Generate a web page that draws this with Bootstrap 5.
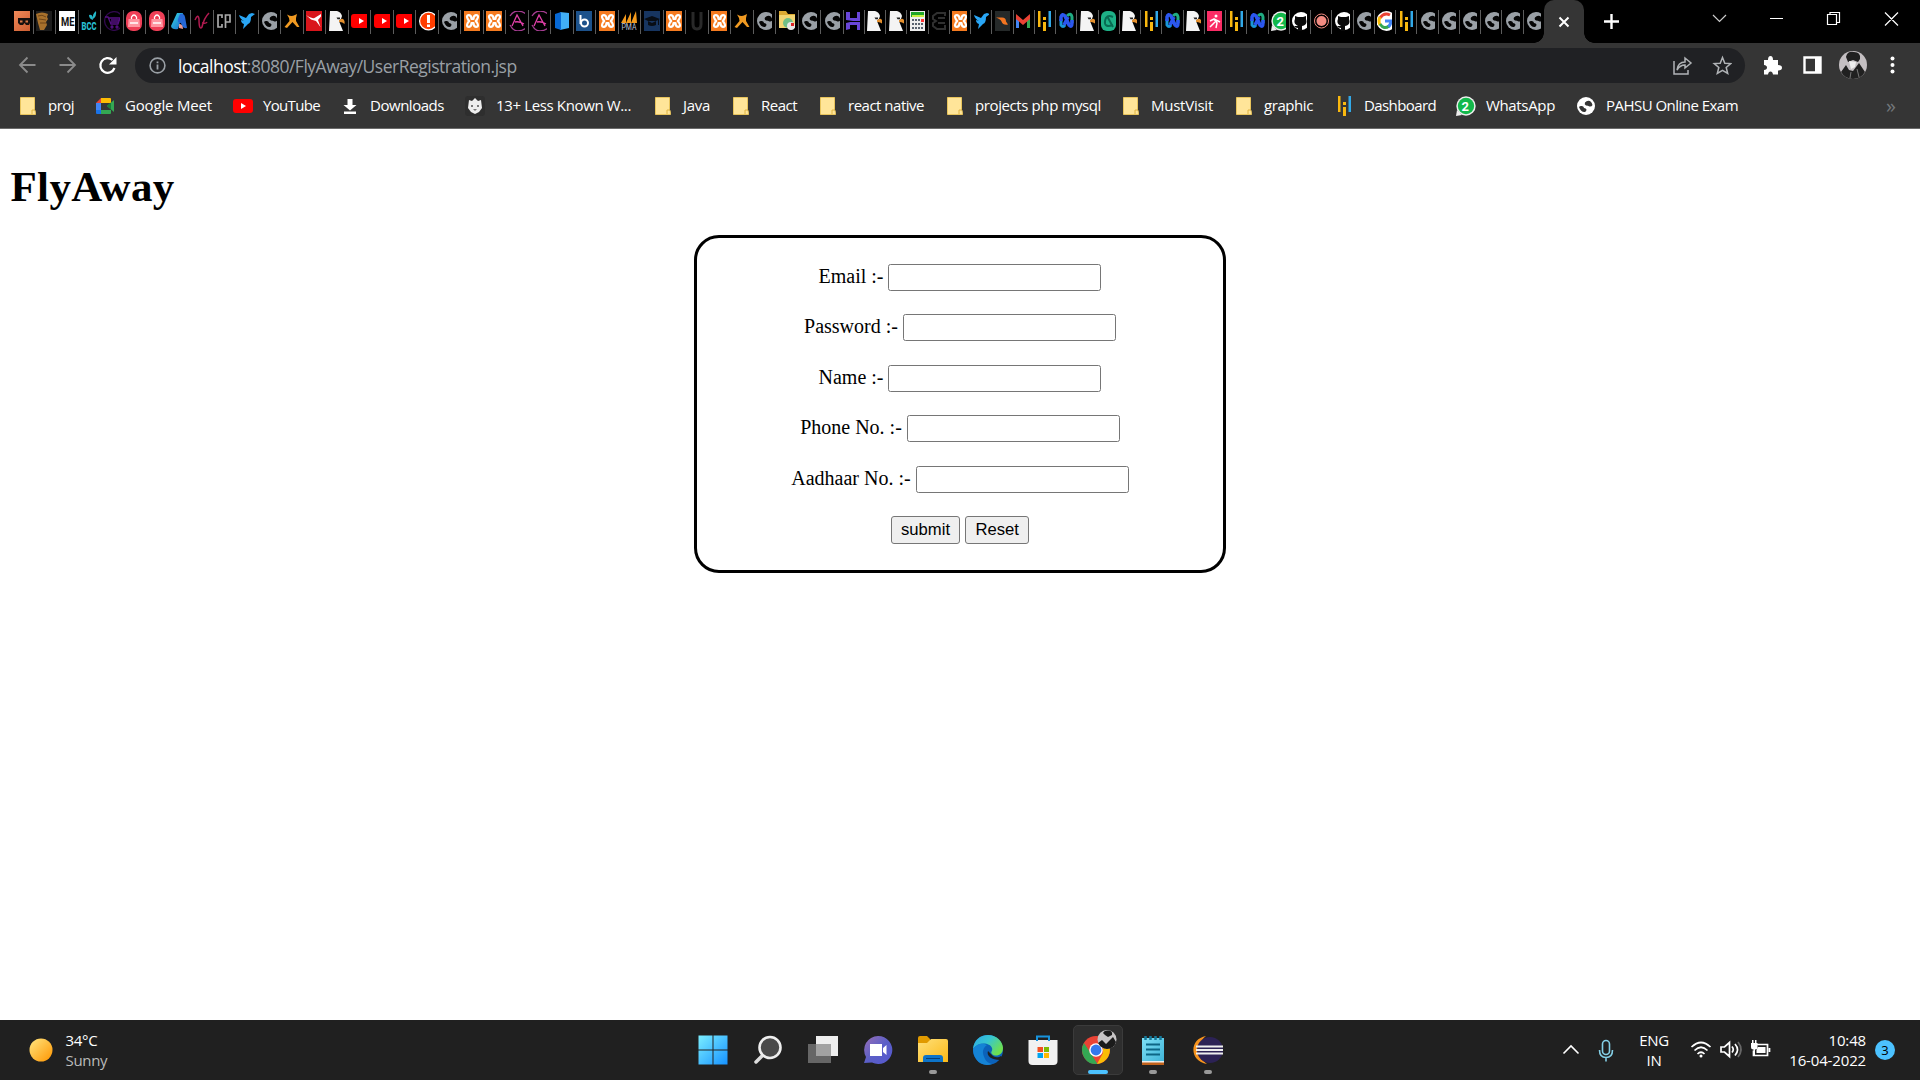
<!DOCTYPE html>
<html lang="en">
<head>
<meta charset="utf-8">
<title>FlyAway - User Registration</title>
<link href="https://cdn.jsdelivr.net/npm/bootstrap@5.3.0/dist/css/bootstrap.min.css" rel="stylesheet">
<style>
body{width:1920px;height:1080px;overflow:hidden;font-family:"Open Sans","Noto Sans",sans-serif;background:#fff;color:#000}
svg{display:block;flex:none}
.strip{height:43px;background:#000;padding-left:11px}
.tabcell{width:22.5px;height:24px;margin-top:10px;padding-left:2.5px;border-right:1px solid #5c5c5c}
.tabcell.slim{width:21.25px}
.tabcell.end{border:0;width:20px}
.tabcell svg{margin-top:1px;width:16px;height:20px}
.tabcell.slim svg,.tabcell.end svg{width:15px}
.active-tab{width:40px;height:43px;background:#353535;border-radius:10px 10px 0 0;position:relative}
.active-tab::before,.active-tab::after{content:"";position:absolute;bottom:0;width:10px;height:10px}
.active-tab::before{left:-10px;background:radial-gradient(circle at 0 0,transparent 9.5px,#353535 10px)}
.active-tab::after{right:-10px;background:radial-gradient(circle at 100% 0,transparent 9.5px,#353535 10px)}
.toolbar{height:42px;background:#353535;padding-top:5px}
.omni{width:1610px;height:35px;border-radius:18px;background:#202124;margin-left:17px;padding:0 13px 0 14px;font-size:17.5px;color:#9aa0a6}
.url{letter-spacing:-.5px;margin-left:12px;line-height:34px}
.bookmarks{height:44px;background:#353535;border-bottom:1px solid #6b6b6b;color:#fff;font-size:15px;padding-left:18px;letter-spacing:-.3px}
.bm{height:41px;white-space:nowrap;--hole:#353535}
.bm svg{width:20px;height:20px;color:#fff}
.bm-more{color:#73777b;font-size:20px}
.view{height:891px;padding:0 10px;font-family:"Liberation Serif",serif}
.brandname{font-size:43px;font-weight:700;letter-spacing:.35px;line-height:49px;margin:0 0 0 .5px;padding-top:33px;height:106px}
.regform{width:532px;height:338px;border:3px solid #000;border-radius:25px;padding-top:26px;font-size:20px;line-height:25px}
.frow{height:50.45px;gap:5px}
.frow input{width:213px;height:27px;border:1px solid #767676;border-radius:2.5px;padding:1px 2px;background:#fff}
.frow button{height:28px;border:1px solid #767676;border-radius:3px;background:#efefef;color:#000;font:16.67px/24px "Liberation Sans",sans-serif;padding:0}
.frow .b-submit{width:69.5px}.frow .b-reset{width:64px}
.taskbar{height:60px;background:#202020;color:#fff;font-size:15px;line-height:20px}
.weather{width:690px;padding-left:29px}
.weather-text{margin-left:12.5px}
.sky{color:#bbb}
.apps{margin-left:-5px}
.tray-text{letter-spacing:-.3px}
.app{width:55px;height:60px;position:relative}
.app.running::after{content:"";position:absolute;left:23.5px;bottom:6px;width:8px;height:4px;border-radius:2px;background:#999}
.app.current::before{content:"";position:absolute;left:3px;top:5px;width:50px;height:50px;border-radius:5px;background:#2e2e2e;border:1px solid #3b3b3b}
.app.current::after{left:18px;width:20px;background:#4cc2ff}
.app svg{position:relative}
.tray{margin-left:auto;width:361px}
.tray-lang{width:60px;margin-left:-1px;margin-right:6px}
.tray-time{width:92px;letter-spacing:-.15px}
.notice{width:20px;height:20px;margin-left:9px;border-radius:50%;background:#4cc2ff;color:#000;font-size:13px}
</style>
<script src="https://cdn.jsdelivr.net/npm/bootstrap@5.3.0/dist/js/bootstrap.bundle.min.js"></script>
</head>
<body>
<svg width="0" height="0" class="position-absolute">
<defs>
<linearGradient id="gSun" x1="0" y1="0" x2="1" y2="1"><stop offset="0" stop-color="#ffe680"/><stop offset="1" stop-color="#ff9500"/></linearGradient>
<linearGradient id="gWin" gradientUnits="userSpaceOnUse" x1="0" y1="0" x2="30" y2="30"><stop offset="0" stop-color="#7df0ff"/><stop offset="1" stop-color="#1490ff"/></linearGradient>
<linearGradient id="gChat" x1="0" y1="0" x2="1" y2="1"><stop offset="0" stop-color="#9a6fb5"/><stop offset=".5" stop-color="#5b5fc7"/><stop offset="1" stop-color="#5558cf"/></linearGradient>
<linearGradient id="gFold" x1="0" y1="0" x2="1" y2="1"><stop offset="0" stop-color="#ffe07a"/><stop offset="1" stop-color="#fbb917"/></linearGradient>
<linearGradient id="gEdge" x1="0" y1="0" x2="1" y2=".6"><stop offset="0" stop-color="#2ca7e8"/><stop offset=".5" stop-color="#37c6d0"/><stop offset="1" stop-color="#6fe04c"/></linearGradient>
<linearGradient id="gNote" x1="0" y1="0" x2="1" y2="1"><stop offset="0" stop-color="#7fe0f5"/><stop offset="1" stop-color="#3fb4d8"/></linearGradient>
<linearGradient id="gMask" x1="0" y1="0" x2="1" y2="1"><stop offset="0" stop-color="#f08a5a"/><stop offset="1" stop-color="#c9582c"/></linearGradient>
<linearGradient id="gA" x1="0" y1="0" x2="1" y2="1"><stop offset="0" stop-color="#35e0e8"/><stop offset="1" stop-color="#1b62c8"/></linearGradient>
</defs>
</svg>
<template id="icons">
<svg id="mask"><path fill="url(#gMask)" d="M0 0h20v20H0z"/><path fill="#16100e" d="M4 7h12v5l-1 2h-3l-1.500-2L9 14H6l-2-2z"/><path d="M6 10.500h2.500M11.500 10.500H14" stroke="#d97747" stroke-width="1.800"/></svg>
<svg id="wood"><path fill="#1d1d1d" d="M0 0h20v20H0z"/><path fill="#a8712c" d="M0 3q6-3 12 0l-1 3 1 2-2 3 1 3-3 5H4L2 12z"/><path stroke="#6f4517" fill="none" d="M2 5q4-2 8 1M3 8l7 1M4 12h6"/></svg>
<svg id="me"><path fill="#fff" d="M0 0h20v20H0z"/><text x="2" y="15" textLength="13.500" lengthAdjust="spacingAndGlyphs" font-family="Roboto" font-weight="700" font-size="12" fill="#111">ME</text></svg>
<svg id="bcc"><path fill="#24b7c9" d="M8 4q4-1 4 5-4-1-4-5zM12 8q-1-5 3-8 1 5-3 8z"/><text x=".5" y="18.500" textLength="15" lengthAdjust="spacingAndGlyphs" font-family="Roboto" font-weight="900" font-size="10" fill="#27bdd0">BCC</text></svg>
<svg id="cart"><g fill="none" stroke="#551083" stroke-width="1.300"><circle cx="10" cy="10" r="9.400" stroke="#31094d"/><path d="M1 6h3l3 7h7l2-6H5M7 9h9M7 11h8"/><circle cx="8" cy="16" r="1"/><circle cx="13" cy="16" r="1"/></g></svg>
<svg id="bag"><rect width="16" height="20" rx="7" fill="#ef3f57"/><path d="M2.500 8h11l.5 8H2z" fill="#ff97a2"/><path d="M5.500 8V6q2.500-4 5 0v2M4 12h8" stroke="#fff" fill="none" stroke-width="1.300"/></svg>
<svg id="afig"><path fill="url(#gA)" d="M6 2h6L7 18q-6 1-7-3z"/><path fill="#2668d6" d="M9 3q4-1 5 3l2 11q-5 1-6-5-4 0-3-4z"/><path fill="#eb9b94" d="M8 13q4 0 4 5l-4-1z"/></svg>
<svg id="vee"><path d="M1 9q3-7 4-1 0 12 3 8Q10 7 15 2M8 12q4 1 5-1" fill="none" stroke="#b21a50" stroke-width="1.500"/></svg>
<svg id="cp"><path d="M6 7V4H2v12h4v-3M9.500 17V4h4.500v7H10" fill="none" stroke="#aaa" stroke-width="1.700"/></svg>
<svg id="bird"><path fill="#29a6f5" d="M0 4l7 3 3-4 3-1 3 1-4 3q0 6-3 7l-5 5 1-5q-3-1-3-4l3 1Q1 8 0 4z"/></svg>
<svg id="globe"><circle cx="10" cy="10" r="9" fill="currentColor"/><path fill="var(--hole,#060606)" d="M3 11q1-1.500 3-1 2 .5 2 2 2 0 2.500 1.500Q10.500 15 9 16q-4 .5-6-5zM9 6.500q2-2.500 5-1.500 2 1.500 2.500 4-1 2-3 1.500Q12 9.500 10 9.500 8 8.500 9 6.500z"/></svg>
<svg id="deer"><path d="M3 3.500q3 1.500 4.500 1.500T11 4l2-1-1 4 0 3 3.500 6-2.500 0-4.500-5L3 17l-2.500-1 5-6-.5-3z" fill="#f09a22"/></svg>
<svg id="puma"><path fill="#d9151b" d="M0 0h20v20H0z"/><path fill="#fff" d="M0 4q5 4 8.500 3L15 3v2.500l-3 3.500 2.500 7-4.500-6-5-1.500z"/></svg>
<svg id="eagle"><path fill="#f4f4f4" d="M1 0h7q4 1 5 5l-1 3-2 2 2 5 2 5H0z"/><path fill="#e5902d" d="M10 9.500q3-3 5-.5 1 1.500.5 4Q13 10.500 10 11z"/><path fill="#222" d="M7.500 6.500h3.500v1.700H8.500z"/></svg>
<svg id="yt"><rect y="3" width="20" height="14" rx="3" fill="#f00"/><path d="M8 7l5 3-5 3z" fill="#fff"/></svg>
<svg id="alert"><circle cx="9.500" cy="10" r="9.500" fill="#fff"/><circle cx="9.500" cy="10" r="8.300" fill="#ff3d00"/><path d="M8 4h3v8H8zm0 9.500h3V16H8z" fill="#fff"/></svg>
<svg id="xampp"><rect width="20" height="20" fill="#f57b20"/><path fill="none" stroke="#fff" stroke-width="2.200" stroke-linejoin="round" d="M4 8.500Q1.500 4 5 4.200q2.500.3 2.500 3.800h2q0-3.500 2.500-3.800Q15.500 4 13 8.500L11.800 10l1.200 1.500q2.500 4.500-1 4.300-2.500-.3-2.500-3.800h-2q0 3.500-2.500 3.800-3.500.2-1-4.300L5.200 10z"/></svg>
<svg id="acirc"><g fill="none" stroke="#a53d91" stroke-width="1.300"><path d="M1 5q3-5 8-5t9 4M1 14q3 6 8 6t9-4"/><path stroke="#e03fa7" d="M3 15L8 4l6 11M6 11q4-1 9 2"/></g></svg>
<svg id="bluebox"><path fill="#41aef5" d="M6 1l9 1v15l-9 2z"/><path fill="#0768d4" d="M1 3l6-2v18l-6-2z"/></svg>
<svg id="bee"><path fill="#1d528b" d="M0 0h20v20H0z"/><path d="M4.500 4v9" stroke="#fff" stroke-width="2"/><circle cx="8.500" cy="12" r="3.500" fill="none" stroke="#fff" stroke-width="2"/></svg>
<svg id="pma"><path fill="#f49a1c" d="M0 12l5-9v9zM5 12l5-11v11zM10 12l5-12 1 12z"/><text x=".5" y="18.500" textLength="15" lengthAdjust="spacingAndGlyphs" font-family="Roboto" font-size="8.500" fill="#bcc1dc">PMA</text></svg>
<svg id="grad"><path fill="#173560" d="M0 0h20v20H0z"/><path fill="#080d14" d="M0 8l8-3 8 3-8 4zM4 10v4q4 2 8 0v-4zM15 8v6h-1V8z"/></svg>
<svg id="ulet"><path d="M4 1v12q0 5 4 5t4-5V1" fill="none" stroke="#292929" stroke-width="3"/></svg>
<svg id="folderc"><path fill="#dca932" d="M0 0h7l2 3h7v14H0z"/><path fill="#f2d573" d="M0 4h16v13H0z"/><circle cx="9" cy="12" r="5" fill="#70bf87"/><circle cx="12" cy="15" r="4" fill="#e8e8e8"/><path fill="#d22" d="M12 12h3v3h-3z"/></svg>
<svg id="hlet"><path fill="#6946d8" d="M0 1h4v6h7V1h3v9H7l-7-1zM0 19v-7l4-1h10v8h-3v-5H4v4z"/></svg>
<svg id="calc"><path fill="#eee" d="M0 0h15v20H0z"/><path fill="#20a528" d="M1 1h13v5H1z"/><path fill="#c7ef42" d="M2 4h12v2H2z"/><path d="M2 9h12M2 13h12M2 17h12" stroke="#58616e" stroke-width="2" stroke-dasharray="2 1"/><path fill="#f33" d="M11 8h3v3h-3z"/></svg>
<svg id="elet"><path d="M14 5V2H6L2 5v3l3 2-3 2v3l4 3h8v-4M14 7H7M14 12H7" fill="none" stroke="#303030" stroke-width="2"/></svg>
<svg id="swoosh"><path fill="#252929" d="M0 0h15v20H0z"/><path fill="#f27521" d="M1 6.500h6q4 0 4 4l2 3q-5 1-6.500-3Q6 8.500 1 6.500z"/></svg>
<svg id="gmail"><path fill="#4285f4" d="M0 6l3 3v8H0z"/><path fill="#34a853" d="M11 8l3-3v12h-3z"/><path fill="#ea4335" d="M0 3l7 6 7-6v5l-7 6-7-6z"/></svg>
<svg id="lil"><path fill="#f9b80f" d="M1 0h2.500v16H1zM6 6h3v3H6zM6 11h3v9H6z"/><path fill="#32a9e8" d="M11.500 0h2.500v16h-2.500z"/></svg>
<svg id="inf"><path fill="none" stroke="#20ac82" stroke-width="3" d="M8 5q4-4 5 1v6"/><path fill="none" stroke="#1996d8" stroke-width="3" d="M2 8v6q2 3 4 0"/><path fill="none" stroke="#2b57f0" stroke-width="3.500" d="M2 10V6q1-4 4-1l4 9q3 3 3-2V9M5 14l4-8"/></svg>
<svg id="greenc"><rect width="15" height="20" rx="6" fill="#1eb187"/><path d="M12 6Q5 3 4 10t8 4M6 5l6 11" fill="none" stroke="#086b52" stroke-width="2"/></svg>
<svg id="pink"><path fill="#fa2c65" d="M0 0h15v20H0z"/><circle cx="9" cy="5" r="1.500" fill="#fff"/><path d="M3 10l4-2 3 4-1 5M7 8l6 3M8 11l-5 5" fill="none" stroke="#fff" stroke-width="1.500"/></svg>
<svg id="wa"><circle cx="10" cy="10" r="9.700" fill="#eee"/><path d="M0 20l1-6 5 5z" fill="#eee"/><circle cx="10" cy="10" r="8.200" fill="#13b84b"/><text x="5.500" y="15" font-family="Roboto" font-weight="700" font-size="13" fill="#fff">2</text></svg>
<svg id="gh"><circle cx="9" cy="10" r="9" fill="#fff"/><path d="M3 5l3 1h5l3-1v3q2 6-4 7v5H6v-3q-3 0-4-2h4q-5-2-3-7z" fill="#090909"/></svg>
<svg id="rec"><circle cx="7.500" cy="10" r="7" fill="none" stroke="#f28b82"/><circle cx="7.500" cy="10" r="5" fill="#f28b82"/></svg>
<svg id="goog"><circle cx="9.500" cy="10" r="10" fill="#fff"/><g fill="none" stroke-width="3"><path stroke="#ea4335" d="M3 7q4-6 10-3"/><path stroke="#fbbc05" d="M3 6q-2 4 0 8"/><path stroke="#34a853" d="M3 13q4 6 9 2"/><path stroke="#4285f4" d="M8 10h6q0 3-2.500 6"/></g></svg>
<svg id="folder"><path d="M2.500 1.500h14v12q1 1 1 5h-15z" fill="#ffe599" stroke="#e8c45c"/><path d="M14 18v-4h3" fill="none" stroke="#e0b440"/></svg>
<svg id="meet"><path fill="#4285f4" d="M0 7h5v8H0z"/><path fill="#ea4335" d="M0 7l5-5v5z"/><path fill="#fbbc04" d="M5 2h9q1 0 1 1v4H5z"/><path fill="#34a853" d="M5 14h10v3q0 1-1 1H5z"/><path fill="#1a73e8" d="M0 14h5v4H1q-1 0-1-1z"/><path fill="#34a853" d="M11 10l7-6v12z"/><path fill="#188038" d="M11 10l4-3.500v7z"/></svg>
<svg id="down"><path fill="#fff" d="M7.500 3h5v6h4L10 14.500 3.500 9h4zM4 15.500h12V18H4z"/></svg>
<svg id="cat"><rect width="20" height="20" rx="3" fill="#2e2e2e"/><path fill="#eee" d="M4 4l3 1 3-3 3 3 3-1 1 8-3 4-4 2-4-2-3-4z"/><path fill="#777" d="M6 9h2v2H6zm6 0h2v2h-2zM8 13h4l-2 2z"/></svg>
</template>

<header>
<div class="strip d-flex">
  <div id="tabs" class="d-flex"></div>
  <div class="active-tab d-flex align-items-center justify-content-center"><svg width="12" height="12" viewBox="0 0 12 12"><path d="M1.500 1.500l9 9m0-9l-9 9" stroke="#fff" stroke-width="2"/></svg></div>
  <svg width="336" height="43" viewBox="1584 0 336 43" fill="none" stroke="#fff"><path d="M1604 21.500h15M1611.500 14v15" stroke-width="2.400"/><path d="M1713 15l6.500 6.500L1726 15" stroke="#ccc" stroke-width="1.200"/><path d="M1770 18.500h13M1827.500 14.500h9v10h-9zM1830 14.500v-2h9.500v10h-2.500M1885 12.500l13 13m0-13l-13 13" stroke-width="1.200"/></svg>
</div>
<div class="toolbar d-flex">
  <svg width="118" height="35" viewBox="0 48 118 35" fill="none" stroke="#8b8b8b" stroke-width="1.800"><path d="M35.500 65H20.500M27.500 57.500L20 65l7.500 7.500M59.500 65h15M67.500 57.500L75 65l-7.500 7.500"/><path stroke="#fff" stroke-width="2.200" d="M114.500 68a7.300 7.300 0 1 1-2-8"/><path fill="#fff" stroke="none" d="M116.500 57v7.500H109z"/></svg>
  <div class="omni d-flex align-items-center"><svg width="17" height="17" viewBox="0 0 17 17"><circle cx="8.500" cy="8.500" r="7.400" fill="none" stroke="#9aa0a6" stroke-width="1.600"/><path d="M7.600 7.500h1.800v5H7.600zm0-3h1.800v1.800H7.600z" fill="#9aa0a6"/></svg><span class="url"><span class="text-white">localhost</span>:8080/FlyAway/UserRegistration.jsp</span>
    <svg class="ms-auto" width="60" height="24" viewBox="0 0 60 24" fill="none" stroke="#b0b3b6" stroke-width="1.500"><path d="M2 7v13h14v-4M5 16q1-8 8-8V4l6 5-6 5v-3q-5 0-8 5z"/><path d="M50.500 3.500l2.300 5.700 6 .4-4.600 3.900 1.500 6-5.200-3.200-5.200 3.200 1.500-6-4.600-3.900 6-.4z"/></svg></div>
  <svg width="175" height="35" viewBox="1745 48 175 35"><path fill="#fff" d="M1764 60h4q0-4 2.500-4t2.500 4h5v5q4 0 4 2.700t-4 2.700v4h-5q-.500-3-2.500-3t-2.500 3h-4v-4.500q3-.500 3-2.500t-3-2.500z"/><path fill="none" stroke="#fff" stroke-width="2.400" d="M1804.500 57.500h16v15h-16z"/><path fill="#fff" d="M1815 57h6v16h-6z"/><circle cx="1853" cy="65" r="14" fill="#c4bfc2"/><path fill="#202020" d="M1846 57q1-6 8-5 7 0 6 7l-2 3-5-2-5 2zM1841 72l5-7 3 5 4 1 6-8 6 9q-4 7-12 7-8 0-12-7z"/><path fill="#eee" d="M1849 61l7 1-1 5-4 2z"/><path stroke="#777" d="M1851 72l-1 6M1857 69l2 8"/><g fill="#fff"><circle cx="1892.500" cy="58.500" r="2"/><circle cx="1892.500" cy="65" r="2"/><circle cx="1892.500" cy="71.500" r="2"/></g></svg>
</div>
<nav class="bookmarks d-flex" id="bookmarks"></nav>
</header>

<main class="view">
  <h1 class="brandname">FlyAway</h1>
  <form class="regform mx-auto">
    <div class="frow d-flex justify-content-center align-items-start"><label>Email :-</label><input type="text"></div>
    <div class="frow d-flex justify-content-center align-items-start"><label>Password :-</label><input type="password"></div>
    <div class="frow d-flex justify-content-center align-items-start"><label>Name :-</label><input type="text"></div>
    <div class="frow d-flex justify-content-center align-items-start"><label>Phone No. :-</label><input type="text"></div>
    <div class="frow d-flex justify-content-center align-items-start"><label>Aadhaar No. :-</label><input type="text"></div>
    <div class="frow d-flex justify-content-center align-items-start"><button type="button" class="b-submit">submit</button><button type="button" class="b-reset">Reset</button></div>
  </form>
</main>

<footer class="taskbar d-flex align-items-center">
  <div class="weather d-flex align-items-center tray-text"><svg width="24" height="24" viewBox="0 0 24 24"><circle cx="12" cy="12" r="11.500" fill="url(#gSun)"/></svg><div class="weather-text"><div>34°C</div><div class="sky">Sunny</div></div></div>
  <div class="apps d-flex">
    <div class="app d-flex align-items-center justify-content-center"><svg width="30" height="30" viewBox="0 0 30 30" fill="url(#gWin)"><path d="M.500 .500h14v14h-14zM15.500 .500h14v14h-14zM.500 15.500h14v14h-14zM15.500 15.500h14v14h-14z"/></svg></div>
    <div class="app d-flex align-items-center justify-content-center"><svg width="30" height="30" viewBox="0 0 30 30"><path d="M10 20l-7 7" stroke="#ddd" stroke-width="3.500" stroke-linecap="round"/><circle cx="17" cy="12.500" r="10.500" fill="#4a4a4a" stroke="#eee" stroke-width="2.600"/></svg></div>
    <div class="app d-flex align-items-center justify-content-center"><svg width="30" height="30" viewBox="0 0 30 30"><path fill="#eee" d="M8 1h22v20H8z"/><path fill="#666" d="M0 9h23v19H0z"/><path fill="#a2a2a2" d="M8 9h15v12H8z"/></svg></div>
    <div class="app d-flex align-items-center justify-content-center"><svg width="30" height="30" viewBox="0 0 30 30"><path fill="url(#gChat)" d="M15 1a14 14 0 1 1-6 26.500L1 28l2-6A14 14 0 0 1 15 1z"/><path fill="#fff" d="M7 9h12v12H7zM20 13l3.500-3v10L20 17z"/></svg></div>
    <div class="app running d-flex align-items-center justify-content-center"><svg width="30" height="30" viewBox="0 0 30 30"><path fill="#e19a00" d="M0 3q0-2 2-2h7l3 3v5H0z"/><path fill="url(#gFold)" d="M0 8h9l4-4h15q2 0 2 2v21H0z"/><path fill="#0d74c9" d="M5 27v-4q0-3 3-3h14q3 0 3 3v4z"/><path stroke="#063f78" d="M8 23.500h14"/></svg></div>
    <div class="app d-flex align-items-center justify-content-center"><svg width="30" height="30" viewBox="0 0 30 30"><circle cx="15" cy="15" r="15" fill="#0b62ba"/><path fill="url(#gEdge)" d="M0 14C1 5 7 0 15 0c9 0 15 7 15 13 0 8-8 9-11 6-2-2 1-3 0-6-2-5-13-7-19 1z"/><path fill="#1583d5" d="M0 14Q6 6 14 10q-7 5-2 14 2 4 7 5C7 33 0 23 0 14z"/><path fill="#202020" d="M18 19c3 4 7 4 10 2l2 2-3 2c-8 0-14-4-12-9z"/></svg></div>
    <div class="app d-flex align-items-center justify-content-center"><svg width="30" height="30" viewBox="0 0 30 30"><path fill="#f1f1f1" d="M.500 5h29v21q0 4-4 4h-21q-4 0-4-4z"/><path d="M9 6V1.500h12V6" fill="none" stroke="#1793dd" stroke-width="2"/><path fill="#f25022" d="M9.500 12H15v5H9.500z"/><path fill="#7fba00" d="M16 12h5v5h-5z"/><path fill="#00a4ef" d="M9.500 18H15v5H9.500z"/><path fill="#ffb900" d="M16 18h5v5h-5z"/></svg></div>
    <div class="app running current d-flex align-items-center justify-content-center"><svg width="40" height="40" viewBox="0 0 40 40"><circle cx="18" cy="20" r="14" fill="#ea4335"/><path fill="#34a853" d="M6 13l8.500 13 5 8A14 14 0 0 1 6 13z"/><path fill="#fbbc05" d="M19 34l6-11V13h5a14 14 0 0 1-11 21z"/><circle cx="18" cy="20" r="6.800" fill="#fff"/><circle cx="18" cy="20" r="5.400" fill="#3478ee"/><circle cx="29" cy="9.500" r="9.500" fill="#c7c4c5"/><path fill="#1b1b1b" d="M25 3q1-3 5-2.500 5 0 4 4.500l-4 2-3-2zM20 13l4-3 4 4 3-3 4-4 3 5q-2 7-9 7-6-.3-9-6z"/></svg></div>
    <div class="app running d-flex align-items-center justify-content-center"><svg width="30" height="30" viewBox="0 0 30 30"><path fill="url(#gNote)" d="M4 3h22v24H4z"/><path fill="#c0621c" d="M4 27h22v3H4z"/><path fill="#eee" d="M4 26h22v1.500H4z"/><path d="M8 9.500h14M8 14.500h14M8 19.500h14" stroke="#0d6685" stroke-width="2"/><path d="M7.500 1v4M12.500 1v4M17.500 1v4M22.500 1v4" stroke="#14799b" stroke-width="2.500"/></svg></div>
    <div class="app running d-flex align-items-center justify-content-center"><svg width="30" height="30" viewBox="0 0 30 30"><path fill="#f7941e" d="M13 1C-4 4-4 26 14 29 4 22 4 8 13 1z"/><circle cx="17" cy="15" r="13" fill="#2c2255"/><path stroke="#eee" stroke-width="1.800" d="M3 11.500h27M3 15h27M3 18.500h27"/></svg></div>
  </div>
  <div class="tray d-flex align-items-center">
    <svg width="66" height="60" viewBox="1559 1020 66 60" fill="none"><path d="M1563.500 1053.500l7.500-7.500 7.500 7.500" stroke="#fff" stroke-width="1.600"/><g stroke="#84cfe6" stroke-width="1.600"><rect x="1602.500" y="1040.500" width="7" height="14" rx="3.500"/><path d="M1599.500 1050q0 7.500 6.500 7.500t6.500-7.500M1606 1058v3.500"/></g></svg>
    <div class="text-center tray-text tray-lang">ENG<br>IN</div>
    <svg width="84" height="60" viewBox="1690 1020 84 60" fill="none" stroke="#fff" stroke-width="1.700"><path d="M1691.500 1047q9.500-9 19 0M1694.500 1050.500q6.500-6.500 13 0M1697.500 1054q3.500-3.500 7 0"/><circle cx="1701" cy="1056" r="1.500" fill="#fff" stroke="none"/><path d="M1721 1047h3.500l5-4.500v14l-5-4.500h-3.500zM1732 1046.500q2.500 3 0 6M1735 1044q5 5.500 0 11.500"/><path stroke="#666" d="M1738 1042q6 7.500 0 15"/><path d="M1757 1044.500h10.500v11h-14v-5M1769.500 1048v4"/><path fill="#fff" stroke="none" d="M1758 1047h7.500v6h-9v-3zM1751 1043h6.500v4q0 2.500-2.500 2.500v6h-1.500v-6q-2.500 0-2.500-2.500zM1752 1040h1.500v3h-1.500zM1755 1040h1.500v3h-1.500z"/></svg>
    <div class="text-end tray-text tray-time">10:48<br>16-04-2022</div>
    <div class="notice d-flex align-items-center justify-content-center">3</div>
  </div>
</footer>
<script>
const lib = document.getElementById('icons').content;
const art = n => lib.querySelector('#' + n).innerHTML;
const first = 'mask wood me bcc cart bag bag afig vee cp bird globe deer puma eagle yt yt yt alert globe xampp xampp acirc acirc bluebox bee xampp pma grad xampp ulet xampp deer globe folderc globe globe'.split(' ');
const rest = 'hlet eagle eagle calc elet xampp bird swoosh gmail lil inf eagle greenc eagle lil inf eagle pink lil inf wa gh rec gh globe goog lil globe globe globe globe globe'.split(' ');
const cell = (n, c) => `<div class="tabcell ${c}"><svg viewBox="0 0 20 20" preserveAspectRatio="xMinYMin slice" color="#9aa0a6">${art(n)}</svg></div>`;
document.getElementById('tabs').innerHTML = first.map(n => cell(n, '')).join('') + rest.map(n => cell(n, 'slim')).join('') + cell('globe', 'end');

// icon, label, left edge of icon, left edge of label, right edge of label
const marks = [['folder','proj',18,48,74],['meet','Google Meet',96,125,212],['yt','YouTube',233,263,320],['down','Downloads',340,370,444],['cat','13+ Less Known W...',465,496,631],['folder','Java',653,683,710],['folder','React',731,761,797],['folder','react native',818,848,924],['folder','projects php mysql',945,975,1101],['folder','MustVisit',1121,1151,1213],['folder','graphic',1234,1264,1313],['lil','Dashboard',1337,1364,1436],['wa','WhatsApp',1456,1486,1555],['globe','PAHSU Online Exam',1576,1606,1738]];
const bar = document.getElementById('bookmarks');
bar.innerHTML = marks.map((m, i) => `<div class="bm d-flex align-items-center" style="width:${(marks[i + 1] ? marks[i + 1][2] : 1886) - m[2]}px"><svg viewBox="0 0 20 20">${art(m[0])}</svg><span style="margin-left:${m[3] - m[2] - 20}px">${m[1]}</span></div>`).join('') + '<div class="bm bm-more d-flex align-items-center">»</div>';
bar.querySelectorAll('span').forEach((s, i) => {
  const gap = marks[i][4] - marks[i][3] - s.getBoundingClientRect().width;
  s.style.letterSpacing = (-0.3 + gap / marks[i][1].length) + 'px';
});
</script>
</body>
</html>
